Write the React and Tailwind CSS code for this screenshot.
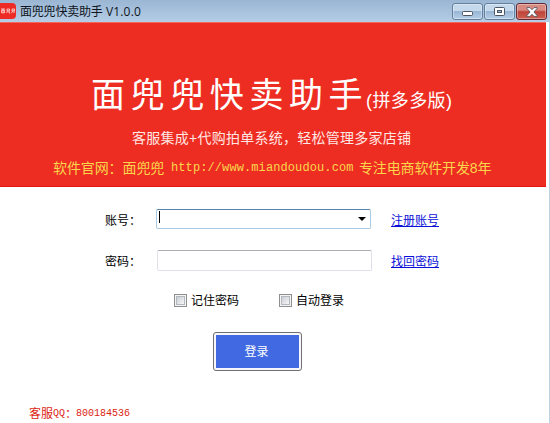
const WindowButton = ({ danger, label, children }) => (
  <button
    aria-label={label}
    className={`flex h-[17px] w-[31px] items-center justify-center rounded-[3px] border shadow-[inset_0_0_0_1px_rgba(255,255,255,0.35)] ${
      danger
        ? "border-[#622a35] bg-linear-to-b from-[#d98a80] from-40% via-[#bf4439] via-52% to-[#cb5f51]"
        : "border-[#65809d] bg-linear-to-b from-[#c5d9ed] from-45% via-[#98b6d5] via-50% to-[#b5cfe8]"
    }`}
  >
    {children}
  </button>
);

const TitleBar = () => (
  <header className="flex h-[22px] shrink-0 items-start bg-linear-to-b from-[#9ab6d3] to-[#b5cde6]">
    <div className="mt-[3px] flex h-4 w-4 items-center justify-center rounded-r-sm bg-[#ee2b24]">
      <svg width="14" height="6" viewBox="0 0 14 6" fill="none" stroke="#ffe3df" strokeWidth=".8">
        <path d="M0 1h4M.6 2.2h3v2.6h-3zM2.1 1v3.8M6 1h2.5v1.8H6zM6.6 2.8 5.6 5M8 2.8V5h1.2M11 1h2.5v1.8H11zM11.6 2.8l-1 2.2M13 2.8V5" />
      </svg>
    </div>
    <h1 className="mt-[3px] ml-[4px] flex h-[18px] items-center text-[12px] whitespace-pre text-[#10151c]">
      <span className="w-[86px] tracking-[-0.2px]">面兜兜快卖助手</span>
      <span className="font-['Open_Sans',sans-serif] text-[12px] tracking-[0.15px]">V1.0.0</span>
    </h1>
    <div className="mt-[3px] mr-[3px] ml-auto flex gap-px">
      <WindowButton label="最小化">
        <svg className="mt-[3px]" width="12" height="5" viewBox="0 0 12 5">
          <rect x=".5" y=".5" width="10" height="4" rx="1" fill="#fff" stroke="#4d5560" />
        </svg>
      </WindowButton>
      <WindowButton label="最大化">
        <svg width="11" height="9" viewBox="0 0 11 9">
          <rect x=".5" y=".5" width="10" height="8" rx="1" fill="#fff" stroke="#4d5560" />
          <rect x="3.5" y="3.5" width="4" height="2" fill="#9fbad5" stroke="#4d5560" />
        </svg>
      </WindowButton>
      <WindowButton label="关闭" danger>
        <svg width="12" height="10" viewBox="0 0 12 10">
          <path
            d="M1 .6h3L6 2.7 8 .6h3v1L7.9 5l3.1 3.4v1H8L6 7.3 4 9.4H1v-1L4.1 5 1 1.6z"
            fill="#fff"
            stroke="#555762"
            strokeWidth=".9"
          />
        </svg>
      </WindowButton>
    </div>
  </header>
);

const Banner = () => (
  <section className="h-[165px] shrink-0 border-t border-b border-t-[#f4655c] border-b-[#e1170f] bg-[#ee2d22]">
    <div className="mt-[51px] ml-[91px] flex h-[42px] items-start whitespace-nowrap text-white">
      <span className="w-[275px] text-[34px] leading-[42px] tracking-[5.6px]">面兜兜快卖助手</span>
      <span className="mt-[14px] text-[18px] leading-[26px] tracking-[0.4px]">(拼多多版)</span>
    </div>
    <p className="mt-[12px] ml-[132px] text-[14px] leading-[20px] tracking-[0.25px] whitespace-nowrap text-[#ffe7e3]">
      客服集成+代购拍单系统，轻松管理多家店铺
    </p>
    <p className="mt-[10px] ml-[53px] flex h-5 items-center text-[14px] leading-[20px] whitespace-nowrap text-[#f9d64c]">
      <span className="w-[118px] tracking-[-0.1px]">软件官网：面兜兜</span>
      <span className="w-[188px] font-['Liberation_Mono',monospace] text-[12px] tracking-[0.1px]">
        http://www.miandoudou.com
      </span>
      <span className="tracking-[-0.15px]">专注电商软件开发8年</span>
    </p>
  </section>
);

const RememberOption = ({ label }) => (
  <label className="flex items-center gap-[4px]">
    <span className="flex h-[13px] w-[13px] items-center justify-center border border-[#8e8f8f] bg-[#f4f4f4]">
      <span className="h-[9px] w-[9px] border border-[#b4b9c0] bg-linear-to-br from-[#cbcfd5] to-[#f6f6f6]" />
    </span>
    <span className="mt-px">{label}</span>
  </label>
);

const LoginForm = () => (
  <form className="flex flex-col text-[12px] leading-[20px] whitespace-nowrap text-black">
    <div className="mt-[22px] ml-[105px] flex h-5 items-center">
      <span className="mt-[3px] w-[51px]">账号：</span>
      <div className="flex h-5 w-[215px] items-center justify-between rounded-[2px] border border-[#a9cbe5] border-t-[#5785ae] pr-[4px] pl-[2px]">
        <span className="mb-1 h-3 w-px bg-black" />
        <svg width="8" height="4" viewBox="0 0 8 4">
          <path d="M0 0h8L4 4z" fill="#000" />
        </svg>
      </div>
      <a href="#register" className="mt-[3px] ml-[20px] text-[#0b10d8] underline">注册账号</a>
    </div>
    <div className="mt-[21px] ml-[105px] flex h-[21px] items-center">
      <span className="mt-[2px] w-[52px]">密码：</span>
      <div className="h-[21px] w-[215px] rounded-[2px] border border-[#dfe2ea] border-t-[#abadb3]" />
      <a href="#recover" className="mt-[2px] ml-[19px] text-[#0b10d8] underline">找回密码</a>
    </div>
    <div className="mt-[19px] ml-[174px] flex h-5 gap-[40px]">
      <RememberOption label="记住密码" />
      <RememberOption label="自动登录" />
    </div>
    <button
      type="button"
      className="mt-[22px] ml-[213px] h-[39px] w-[89px] rounded-[3px] border border-[#707070] bg-[#f6f7fa] p-[2px]"
    >
      <span className="flex h-full items-center justify-center bg-[#4169e1] pr-[2px] text-white">登录</span>
    </button>
  </form>
);

export default function App() {
  return (
    <main className="flex h-[423px] w-[550px] flex-col overflow-hidden bg-white font-['Liberation_Sans','Noto_Sans_CJK_SC',sans-serif]">
      <TitleBar />
      <div className="flex flex-1 flex-col border-r border-[#bfd3e2] pr-[3px]">
        <Banner />
        <LoginForm />
        <footer className="mt-[34px] ml-[29px] flex h-[18px] items-center text-[12px] leading-[18px] whitespace-nowrap text-[#dc1d12]">
          <span>客服</span>
          <span className="w-[12px] font-['Liberation_Mono',monospace] text-[10px]">QQ</span>
          <span className="w-[11px]">：</span>
          <span className="font-['Liberation_Mono',monospace] text-[10px]">800184536</span>
        </footer>
      </div>
    </main>
  );
}
